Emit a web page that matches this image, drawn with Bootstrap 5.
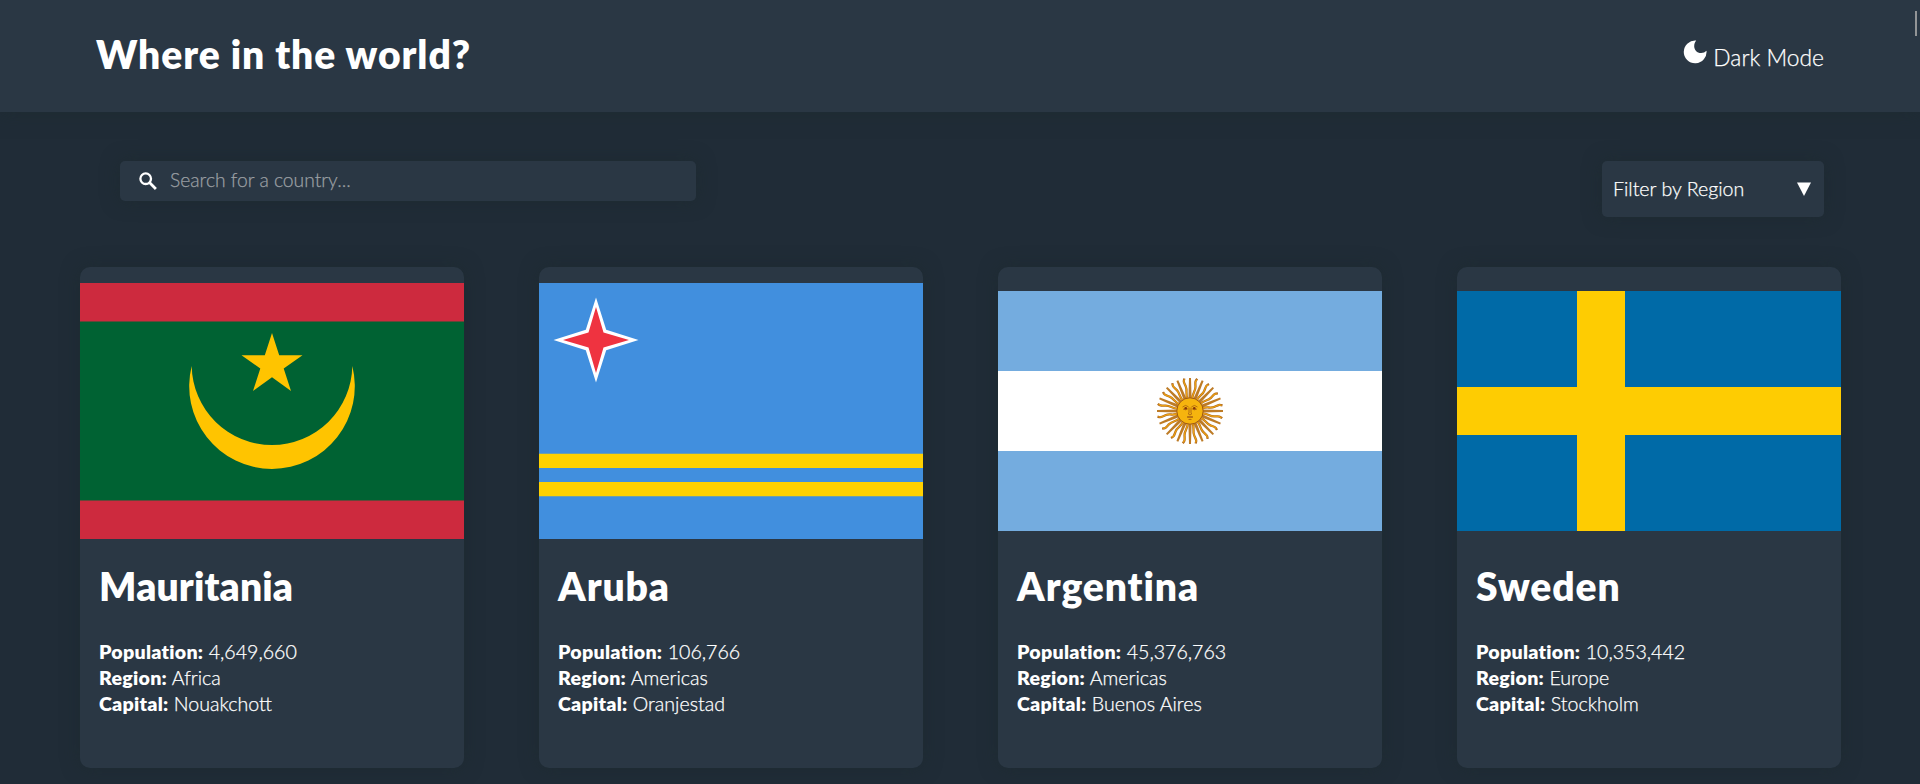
<!DOCTYPE html>
<html lang="en">
<head>
<meta charset="utf-8">
<meta name="viewport" content="width=device-width, initial-scale=1">
<title>Where in the world?</title>
<link rel="stylesheet" href="https://cdn.jsdelivr.net/npm/bootstrap@5.3.0/dist/css/bootstrap.min.css">
<style>
  :root { --page: #202c37; --panel: #2a3744; --shade: 0 0 18px rgba(29, 41, 45, .6); }
  body { background: var(--page); color: #fff; font-family: Lato, "Open Sans", sans-serif; font-weight: 300; font-size: 19.6px; line-height: 26px; overflow: hidden; height: 784px; -webkit-text-stroke: .25px; }
  h1, h2, b { -webkit-text-stroke: 0; }
  .panel { background: var(--panel); box-shadow: var(--shade); color: #fff; }
  .topbar { height: 112px; padding: 0 96px; }
  .topbar h1 { font-size: 39px; font-weight: 800; letter-spacing: .95px; line-height: 48px; padding-bottom: 4px; }
  .mode { font-size: 22.8px; line-height: 30px; padding-top: 1px; }
  .mode svg { margin: -10px 6px 0 0; }
  .filters { padding: 49px 96px 50px 120px; }
  .search { width: 576px; height: 40px; border-radius: 5px; padding-left: 19px; }
  .search input { font-size: 19.3px; font-weight: 300; line-height: 24px; color: #fff; margin: -2px 0 0 13px; }
  .search input::placeholder { color: #9a9fa3; opacity: 1; }
  .region { width: 222px; height: 56px; border-radius: 5px; padding: 0 13px 1px 11px; font-weight: 300; font-size: 19.6px; border: 0; }
  .countries { padding: 0 79px 0 80px; }
  .country { width: 384px; height: 501px; border: 0; border-radius: 10px; }
  .flag { height: 288px; }
  .country .card-body { padding: 7px 19px 0; }
  .country h2 { font-size: 39px; font-weight: 800; line-height: 48px; margin: 0 0 29px; letter-spacing: .9px; }
  .country:first-child h2 { letter-spacing: .15px; }
  .country b { font-weight: 800; letter-spacing: .26px; }
  .thumb { top: 11px; right: 3px; width: 2px; height: 25px; background: #929496; }
</style>
</head>
<body>
<header class="topbar panel d-flex align-items-center justify-content-between position-relative">
  <h1 class="m-0">Where in the world?</h1>
  <div class="mode d-flex align-items-center">
    <svg width="24" height="24" viewBox="0 0 24 24" fill="#fff"><path d="M13.2.6A11.4 11.4 0 1 0 23.5 10.7A7.2 7.2 0 0 1 18 13.1C14 13.1 11.2 10 11.2 6.3C11.2 4 12 2 13.200 .6Z"/></svg>
    <span>Dark Mode</span>
  </div>
  <div class="thumb position-absolute"></div>
</header>
<main>
  <div class="filters d-flex justify-content-between align-items-start">
    <div class="search panel d-flex align-items-center">
      <svg width="18" height="18" viewBox="0 0 18 18" fill="none" stroke="#fff" stroke-width="2.300"><circle cx="6.700" cy="6.700" r="5.300"/><path d="M10.500 10.500L16.900 16.900" stroke-width="2.800"/></svg>
      <input class="bg-transparent border-0 p-0 flex-grow-1" type="text" placeholder="Search for a country...">
    </div>
    <button type="button" class="region panel d-flex align-items-center justify-content-between">
      <span>Filter by Region</span>
      <svg width="14" height="14" viewBox="0 0 14 14" fill="#fff"><path d="M0 .5H14L7 14Z"/></svg>
    </button>
  </div>
  <div class="countries d-flex justify-content-between">
    <article class="country card panel">
      <div class="flag d-flex align-items-center">
        <svg width="384" height="256" viewBox="0 0 384 256"><path fill="#cd2a3e" d="M0 0H384V256H0z"/><path fill="#006233" d="M0 38.400H384V217.600H0z"/><path fill="#ffc400" d="M111.700 83A80.310 80.310 0 0 0 272.300 83A82.800 82.800 0 1 1 111.700 83ZM192 50L199.200 72.300H222.500L203.700 85.500L211 108L192 94.200L173 108L180.300 85.500L161.500 72.300H184.800Z"/></svg>
      </div>
      <div class="card-body">
        <h2>Mauritania</h2>
        <div><b>Population:</b> 4,649,660</div>
        <div><b>Region:</b> Africa</div>
        <div><b>Capital:</b> Nouakchott</div>
      </div>
    </article>
    <article class="country card panel">
      <div class="flag d-flex align-items-center">
        <svg width="384" height="256" viewBox="0 0 384 256"><path fill="#418fde" d="M0 0H384V256H0z"/><path fill="#ffd100" d="M0 170.700H384V185H0zM0 199H384V213.300H0z"/><path fill="#fff" d="M57 14.500L67.200 46.800L99.500 57L67.200 67.200L57 99.500L46.800 67.200L14.500 57L46.800 46.800Z"/><path fill="#ef3340" d="M57 24L64.500 49.500L90 57L64.500 64.500L57 90L49.500 64.500L24 57L49.500 49.500Z"/></svg>
      </div>
      <div class="card-body">
        <h2>Aruba</h2>
        <div><b>Population:</b> 106,766</div>
        <div><b>Region:</b> Americas</div>
        <div><b>Capital:</b> Oranjestad</div>
      </div>
    </article>
    <article class="country card panel">
      <div class="flag d-flex align-items-center">
        <svg width="384" height="240" viewBox="0 0 384 240">
          <defs>
            <g id="r1">
              <path d="M-1.600 -12L-1 -33H1L1.600 -12Z" fill="#bd7b26"/>
              <path d="M0 -12C-1.600 -18 1.800 -20 .6 -25S-.8 -30 .8 -33" transform="rotate(11.250)" fill="none" stroke="#b06a20" stroke-width="2.300"/>
              <path d="M0 -12C-1.600 -18 1.800 -20 .6 -25S-.8 -30 .8 -32" transform="rotate(11.250)" fill="none" stroke="#eda212" stroke-width="1.200"/>
            </g>
            <g id="r2"><use href="#r1"/><use href="#r1" transform="rotate(22.500)"/></g>
            <g id="r4"><use href="#r2"/><use href="#r2" transform="rotate(45)"/></g>
            <g id="r8"><use href="#r4"/><use href="#r4" transform="rotate(90)"/></g>
          </defs>
          <path fill="#74acdf" d="M0 0H384V240H0z"/><path fill="#fff" d="M0 80H384V160H0z"/>
          <g transform="translate(192 120)">
            <use href="#r8"/><use href="#r8" transform="rotate(180)"/>
            <circle r="13.200" fill="#f6b40e" stroke="#a05a14" stroke-width="1"/>
            <g fill="none" stroke="#a35c12" stroke-width=".8"><path d="M-7.500 -4Q-4.500 -7 -1.500 -4.200M7.500 -4Q4.500 -7 1.500 -4.200M-7 -2Q-4.500 -.3 -2 -2.300M7 -2Q4.500 -.3 2 -2.300M-1 -3.500V2Q-2.500 3 -1 3.600H1Q2.500 3 1 2V-3.500M-3 6Q0 4.500 3 6Q0 7.500 -3 6M-1.500 8.500H1.500"/></g>
            <g fill="#85340a"><circle cx="-4.300" cy="-2.700" r="1.300"/><circle cx="4.300" cy="-2.700" r="1.300"/></g>
          </g>
        </svg>
      </div>
      <div class="card-body">
        <h2>Argentina</h2>
        <div><b>Population:</b> 45,376,763</div>
        <div><b>Region:</b> Americas</div>
        <div><b>Capital:</b> Buenos Aires</div>
      </div>
    </article>
    <article class="country card panel">
      <div class="flag d-flex align-items-center">
        <svg width="384" height="240" viewBox="0 0 384 240"><path fill="#006aa7" d="M0 0H384V240H0z"/><path fill="#fecc02" d="M120 0H168V96H384V144H168V240H120V144H0V96H120z"/></svg>
      </div>
      <div class="card-body">
        <h2>Sweden</h2>
        <div><b>Population:</b> 10,353,442</div>
        <div><b>Region:</b> Europe</div>
        <div><b>Capital:</b> Stockholm</div>
      </div>
    </article>
  </div>
</main>
<script src="https://cdn.jsdelivr.net/npm/bootstrap@5.3.0/dist/js/bootstrap.bundle.min.js"></script>
</body>
</html>
